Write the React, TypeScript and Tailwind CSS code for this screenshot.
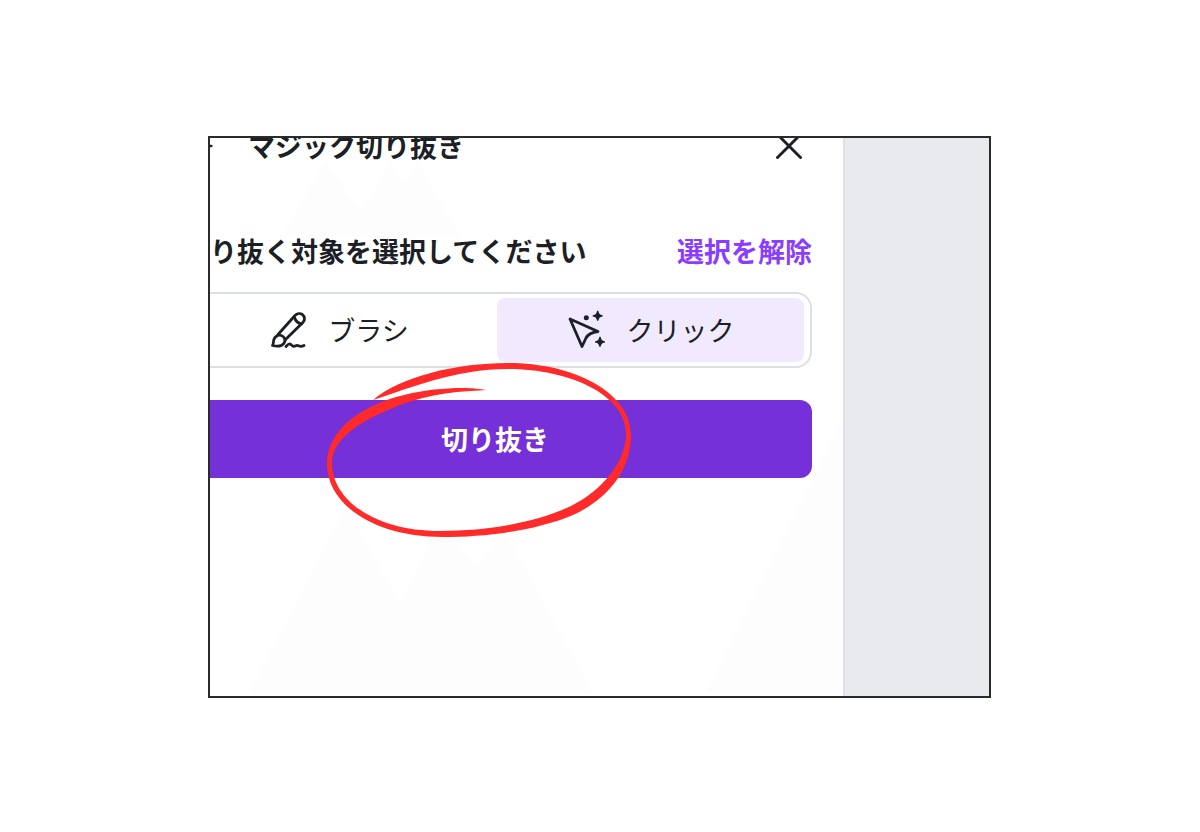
import React from "react";
import { ArrowLeft, X } from "lucide-react";

function BrushIcon() {
  return (
    <svg
      viewBox="0 0 38 38"
      className="size-[38px] shrink-0"
      fill="none"
      stroke="currentColor"
      strokeWidth="2.8"
      strokeLinecap="round"
      strokeLinejoin="round"
      aria-hidden="true"
    >
      <path d="M8 23.500 25 4.500c2-2.200 5.300-2.600 7.500-.8 2.400 2 2.600 5.200.6 7.500L15 29" />
      <path d="M24.500 6.500c1 3.500 3.200 5.500 7 6.500" />
      <path d="M2.500 34.500c1.200-1.500.6-3.500 1.400-6 .9-3 4.200-5.200 7.500-4 3.500 1.300 4.500 5 2.600 7.700-1.900 2.700-6.500 3.600-11.500 2.300Z" />
      <path d="M16 35.500c2.500-3 4-3.200 5.500-1.500 1.200 1.500 2.500 1.800 4.200.8 1-.7 1.800-.6 2.800 0 1.800 1 3.600.8 5.500-.3" />
    </svg>
  );
}

function ClickIcon() {
  return (
    <svg viewBox="0 0 40 40" className="size-[40px] shrink-0" aria-hidden="true">
      <path
        d="M3 9 31 21.500C24 22.500 20.500 25 19 28L15 36.500Z"
        fill="none"
        stroke="currentColor"
        strokeWidth="2.8"
        strokeLinejoin="round"
      />
      <path
        d="M30.700 1c.8 3.300 1.500 4 4.800 4.800-3.300.8-4 1.500-4.800 4.800-.8-3.300-1.500-4-4.800-4.800 3.300-.8 4-1.500 4.800-4.800ZM33 27c.8 3.300 1.500 4 4.800 4.800-3.300.8-4 1.500-4.800 4.800-.8-3.300-1.500-4-4.800-4.800 3.300-.8 4-1.500 4.800-4.800Z"
        fill="currentColor"
        stroke="currentColor"
        strokeWidth="1.2"
      />
      <circle cx="19.3" cy="7.7" r="2.5" fill="currentColor" />
    </svg>
  );
}

function Peaks() {
  return (
    <svg
      viewBox="0 0 633 558"
      preserveAspectRatio="none"
      className="absolute inset-0 size-full"
      fill="#fdfdfd"
      aria-hidden="true"
    >
      <path d="M72 99 115 24 152 74 180 24 195 49 208 24 250 99Z" />
      <path d="M39 555 136 369 190 465 229 390 267 430 293 390 383 555Z" />
      <path d="M496 555 633 280V555Z" />
    </svg>
  );
}

function MarkerCircle() {
  return (
    <svg
      viewBox="320 355 320 190"
      className="pointer-events-none absolute left-1/2 -top-[45px] -ml-[175px] h-[190px] w-[320px]"
      fill="#ff2a2a"
      aria-hidden="true"
    >
      <path d="M373 400C400 377 455 363 508 363C575 363 631 393 631 435C631 472 606 500 573 515C535 531 485 537 443 537C375 537 327 505 327 464C327 446 337 429 354 417C383 396 425 388 463 388C473 388 480 389 487 390C476 391 465 391 457 392C425 395 397 405 375 416C350 428 332 444 332 463C332 500 375 531 440 531C490 531 537 522 571 506C603 490 626 461 626 434C626 395 570 369 508 369C455 369 410 388 373 400Z" />
    </svg>
  );
}

export default function App() {
  return (
    <div className="flex min-h-screen bg-white pt-[136px] pr-[209px] pb-[134px] pl-[208px] font-['Noto_Sans_CJK_JP',sans-serif] text-[27px] leading-[40px] text-[#1c1f26]">
      <main className="flex flex-1 overflow-hidden border-2 border-[#2b2b2b]">
        <section className="relative flex-1 border-r-2 border-[#dfe1e6]">
          <Peaks />
          <div className="relative -mt-[15px] mr-[31px] -ml-8 flex flex-col">
            <header className="flex items-center justify-between">
              <div className="flex items-center gap-7">
                <button type="button" aria-label="戻る">
                  <ArrowLeft size={42} strokeWidth={1.5} />
                </button>
                <h1 className="font-bold">マジック切り抜き</h1>
              </div>
              <button type="button" aria-label="閉じる">
                <X size={46} strokeWidth={1.5} />
              </button>
            </header>

            <div className="mt-[62px] flex items-center justify-between pl-8">
              <h2 className="font-bold">り抜く対象を選択してください</h2>
              <button type="button" className="font-bold text-[#8b3dff]">
                選択を解除
              </button>
            </div>

            <div className="mt-[21px] grid grid-cols-2 gap-1 rounded-2xl border-2 border-[#dcdfe4] px-1.5 py-1">
              <button
                type="button"
                className="flex h-16 items-center justify-center gap-5 rounded-lg"
              >
                <BrushIcon />
                ブラシ
              </button>
              <button
                type="button"
                className="flex h-16 items-center justify-center gap-5 rounded-lg bg-[#f1e9fe]"
              >
                <ClickIcon />
                クリック
              </button>
            </div>

            <div className="relative mt-8">
              <button
                type="button"
                className="h-[78px] w-full rounded-xl bg-[#7630d7] font-bold text-white"
              >
                切り抜き
              </button>
              <MarkerCircle />
            </div>
          </div>
        </section>
        <aside className="w-36 bg-[#e9eaee]" />
      </main>
    </div>
  );
}
